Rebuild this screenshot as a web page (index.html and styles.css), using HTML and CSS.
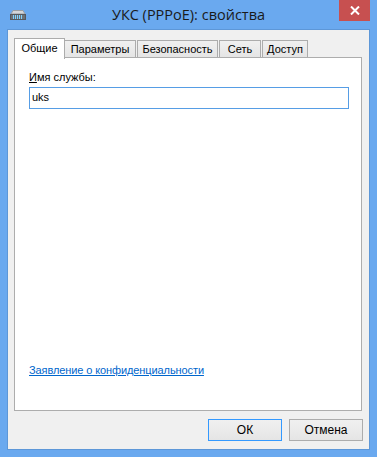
FILE: index.html
```html
<!DOCTYPE html>
<html lang="ru">
<head>
<meta charset="utf-8">
<title>УКС (PPPoE): свойства</title>
<link rel="stylesheet" href="styles.css">
</head>
<body>
<div class="window">
  <div class="titlebar">
    <svg class="app-icon" width="16" height="10" viewBox="0 0 16 10">
      <path d="M3 0.5 H13 L15 4 H1 Z" fill="#d4d6d9" stroke="#9a9ea3" stroke-width="1"/>
      <rect x="0.5" y="4.5" width="15" height="5" fill="#6c7177" stroke="#55595e"/>
      <rect x="3" y="5" width="1" height="4" fill="#7fd3ff"/>
      <rect x="5" y="5" width="1" height="4" fill="#7fd3ff"/>
      <rect x="7" y="5" width="1" height="4" fill="#7fd3ff"/>
      <rect x="9" y="5" width="1" height="4" fill="#7fd3ff"/>
      <rect x="11" y="5" width="1" height="4" fill="#7fd3ff"/>
    </svg>
    <div class="title">УКС (PPPoE): свойства</div>
    <div class="close">
      <svg width="10" height="9" viewBox="0 0 10 9"><path d="M1 0.5 L9 8.5 M9 0.5 L1 8.5" stroke="#fff" stroke-width="2"/></svg>
    </div>
  </div>
  <div class="client">
    <div class="tabs">
      <div class="tab selected">Общие</div>
      <div class="tab w-params">Параметры</div>
      <div class="tab w-sec">Безопасность</div>
      <div class="tab w-net">Сеть</div>
      <div class="tab w-acc">Доступ</div>
    </div>
    <div class="panel">
      <div class="label"><span class="ul">И</span>мя службы:</div>
      <div class="input">uks</div>
      <div class="spacer"></div>
      <a class="link" href="#">Заявление о конфиденциальности</a>
    </div>
    <div class="buttons">
      <div class="btn default">ОК</div>
      <div class="btn">Отмена</div>
    </div>
  </div>
</div>
</body>
</html>
```

FILE: styles.css
```css
html, body {
  margin: 0;
  padding: 0;
  background: #6aa9ef;
}
.window {
  width: 377px;
  height: 457px;
  background: #6aa9ef;
  display: flex;
  flex-direction: column;
  font-family: "Liberation Sans", Arial, sans-serif;
  font-size: 11px;
  color: #000;
}
.titlebar {
  height: 29px;
  display: flex;
  align-items: flex-start;
  position: relative;
}
.app-icon {
  margin: 10px 0 0 10px;
}
.title {
  position: absolute;
  left: 0;
  right: 0;
  top: 5px;
  text-align: center;
  font-family: "Open Sans", "Noto Sans", sans-serif;
  font-size: 14.5px;
  color: #1a1a1a;
}
.close {
  margin-left: auto;
  margin-right: 7px;
  width: 31px;
  height: 21px;
  background: #c75050;
  display: flex;
  align-items: center;
  justify-content: center;
  position: relative;
}
.client {
  flex: 1;
  margin: 0 7px 7px 7px;
  border: 1px solid #5d97d8;
  background: #f0f0f0;
  padding: 8px 7px 0 6px;
  display: flex;
  flex-direction: column;
}
.tabs {
  display: flex;
  height: 20px;
  align-items: flex-end;
  padding-left: 2px;
  position: relative;
  z-index: 1;
}
.tab {
  height: 17px;
  box-sizing: border-box;
  border: 1px solid #acacac;
  border-bottom: none;
  background: linear-gradient(#f0f0f0, #e5e5e5);
  padding: 2px 0 0 0;
  text-align: center;
  margin-right: 1px;
  margin-bottom: 1px;
}
.tab.selected {
  height: 21px;
  width: 51px;
  margin: 0 -1px 0 -2px;
  background: #fff;
  padding-top: 3px;
  margin-bottom: -1px;
  position: relative;
  z-index: 2;
}
.w-params { width: 72px; }
.w-sec { width: 81px; }
.w-net { width: 42px; }
.w-acc { width: 46px; }
.panel {
  height: 354px;
  box-sizing: border-box;
  border: 1px solid #adadad;
  background: #fff;
  padding: 13px 12px 0 14px;
  display: flex;
  flex-direction: column;
  margin-top: -1px;
}
.label {
  height: 16px;
}
.ul {
  text-decoration: underline;
}
.input {
  height: 22px;
  box-sizing: border-box;
  border: 1px solid #569de5;
  padding: 3px 2px 0 2px;
}
.spacer {
  height: 255px;
}
.link {
  color: #0066cc;
  text-decoration: underline;
  align-self: flex-start;
  letter-spacing: -0.1px;
}
.buttons {
  display: flex;
  justify-content: flex-end;
  gap: 7px;
  margin-top: 8px;
  margin-right: -1px;
}
.btn {
  width: 74px;
  height: 22px;
  box-sizing: border-box;
  border: 1px solid #acacac;
  background: linear-gradient(#f0f0f0, #e5e5e5);
  display: flex;
  align-items: center;
  justify-content: center;
  font-size: 12px;
}
.btn.default {
  border-color: #3399ff;
}
```
